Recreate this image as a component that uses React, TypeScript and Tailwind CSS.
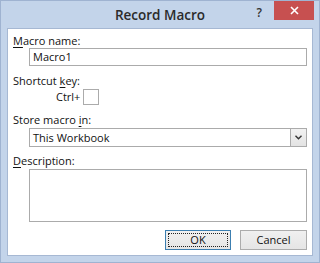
import React from 'react';

const font = "font-['Segoe_UI','Open_Sans',sans-serif]";

const Key = ({ children }: { children: React.ReactNode }) => (
  <span className="underline underline-offset-[2px]">{children}</span>
);

const App = () => {
  return (
    <div className={`w-[320px] h-[263px] bg-[#c3d4ea] border border-[#9fb3d1] flex flex-col ${font}`}>
      {/* Title bar */}
      <div className="h-[27px] grid grid-cols-[1fr_auto_1fr] items-start">
        <div />
        <div className="pt-[4px] text-[13.5px] leading-[20px] font-semibold text-[#2b2b2b]">Record Macro</div>
        <div className="flex justify-end items-start">
          <span className="mt-[5px] mr-[12px] text-[12px] leading-[14px] font-semibold text-[#333]">?</span>
          <button className="w-[40px] h-[19px] mr-[5px] bg-[#c75050] flex items-center justify-center">
            <svg width="9" height="9" viewBox="0 0 9 9">
              <path d="M1 1L8 8M8 1L1 8" stroke="#fff" strokeWidth="1.6" />
            </svg>
          </button>
        </div>
      </div>

      {/* Client area */}
      <div className="mx-[6px] h-[228px] bg-white border border-[#a6b8d3] px-[5px] text-[11px] text-[#111] flex flex-col">
        <div className="mt-[4px] h-[15px] leading-[15px]"><Key>M</Key>acro name:</div>
        <div className="ml-[16px] h-[18px] border border-[#ababab] px-[3px] leading-[16px]">Macro1</div>

        <div className="mt-[7px] h-[15px] leading-[15px]">Shortcut <Key>k</Key>ey:</div>
        <div className="mt-[1px] flex items-center h-[16px]">
          <span className="ml-[43px] mr-[3px]">Ctrl+</span>
          <div className="w-[16px] h-[16px] border border-[#ababab]" />
        </div>

        <div className="mt-[7px] h-[15px] leading-[15px]">Store macro <Key>i</Key>n:</div>
        <div className="mt-[1px] ml-[16px] h-[19px] border border-[#ababab] flex items-stretch">
          <span className="flex-1 px-[3px] leading-[17px]">This Workbook</span>
          <div className="w-[16px] border-l border-[#ababab] bg-gradient-to-b from-[#f2f2f2] to-[#e3e3e3] flex items-center justify-center">
            <svg width="7" height="5" viewBox="0 0 7 5">
              <path d="M0.5 0.8L3.5 3.8L6.5 0.8" fill="none" stroke="#333" strokeWidth="1.4" />
            </svg>
          </div>
        </div>

        <div className="mt-[6px] h-[15px] leading-[15px]"><Key>D</Key>escription:</div>
        <div className="mt-[1px] ml-[16px] h-[53px] border border-[#ababab]" />

        <div className="mt-[8px] flex justify-end gap-[9px]">
          <button className="w-[66px] h-[20px] border border-[#3c7fb1] bg-gradient-to-b from-[#f0f0f0] to-[#e5e5e5] p-[2px]">
            <div className="h-full outline outline-1 outline-dotted outline-[#222] -outline-offset-1 flex items-center justify-center leading-[14px]">OK</div>
          </button>
          <button className="w-[67px] h-[20px] border border-[#acacac] bg-gradient-to-b from-[#f0f0f0] to-[#e5e5e5] leading-[18px]">Cancel</button>
        </div>
      </div>
    </div>
  );
};

export default App;
